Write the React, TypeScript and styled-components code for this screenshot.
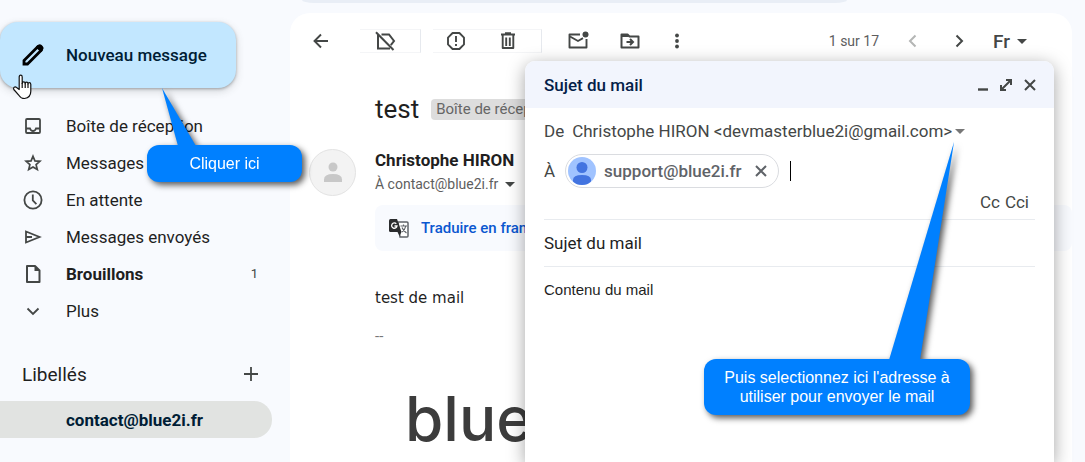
import React from "react";
import styled, { createGlobalStyle, css } from "styled-components";

const GlobalStyle = createGlobalStyle`
  *, *::before, *::after { box-sizing: border-box; }
  html, body { margin: 0; padding: 0; }
  body {
    background: #f8fafe;
    color: #1f1f1f;
    font-family: Roboto, "Liberation Sans", sans-serif;
    font-size: 17px;
    overflow: hidden;
  }
  button, input, select, textarea {
    font: inherit;
    color: inherit;
    background: none;
    border: 0;
    padding: 0;
    margin: 0;
    outline: 0;
  }
  button { cursor: pointer; }
  a { color: inherit; text-decoration: none; }
`;

const Page = styled.div`
  position: relative;
  display: flex;
  height: 100vh;
  overflow: hidden;
`;

/* ---------- Sidebar ---------- */

const Sidebar = styled.aside`
  position: relative;
  flex: 0 0 290px;
  padding-top: 22px;
  z-index: 3;
`;

const ComposeButton = styled.button`
  display: flex;
  align-items: center;
  gap: 20px;
  width: 236px;
  height: 66px;
  padding-left: 20px;
  border-radius: 18px;
  background: #c2e7ff;
  color: #001d35;
  font-size: 17px;
  font-weight: 500;
  box-shadow: 0 1px 3px rgba(60, 64, 67, 0.4), 0 3px 8px rgba(60, 64, 67, 0.2);
`;

const NavList = styled.nav`
  display: flex;
  flex-direction: column;
  margin-top: 19px;
`;

const NavItem = styled.a<{ $bold?: boolean; $active?: boolean }>`
  display: grid;
  grid-template-columns: 26px 1fr auto;
  column-gap: 20px;
  align-items: center;
  width: 272px;
  height: 37px;
  padding: 0 14px 0 20px;
  border-radius: 0 18px 18px 0;
  font-weight: ${(p) => (p.$bold || p.$active ? 700 : 400)};
  ${(p) =>
    p.$active &&
    css`
      background: #e1e3e1;
      color: #001d35;
    `}
  svg { justify-self: center; }
`;

const Count = styled.span`
  font-size: 13px;
  font-weight: 400;
  color: #444746;
`;

const LabelsHeader = styled.div`
  display: flex;
  align-items: center;
  justify-content: space-between;
  margin: 25px 30px 7px 22px;
  height: 40px;
  font-size: 19px;
`;

const LabelsTitle = styled.h2`
  margin: 0;
  font-size: inherit;
  font-weight: 400;
`;

const IconButton = styled.button`
  display: inline-flex;
  align-items: center;
  justify-content: center;
  color: #444746;
`;

/* ---------- Message pane ---------- */

const Content = styled.div`
  flex: 1;
  min-width: 0;
  display: flex;
  flex-direction: column;
  padding-right: 13px;
`;

const SearchEdge = styled.div`
  flex: 0 0 3px;
  width: 545px;
  margin: 0 0 10px 12px;
  border-radius: 0 0 12px 12px / 0 0 3px 3px;
  background: #e9eef6;
`;

const MessagePane = styled.main`
  flex: 1;
  background: #fff;
  border-radius: 20px 20px 0 0;
  overflow: hidden;
`;

const Toolbar = styled.div`
  display: flex;
  align-items: center;
  height: 56px;
  padding: 0 45px 0 20px;
`;

const ToolGroup = styled.div<{ $gap?: number; $left: number; $boxed?: boolean }>`
  display: flex;
  align-items: center;
  gap: ${(p) => p.$gap ?? 0}px;
  height: 24px;
  margin-left: ${(p) => p.$left}px;
  ${(p) =>
    p.$boxed &&
    css`
      padding: 0 23px 0 13px;
      border: solid #f4f5f7;
      border-width: 1px 1px 1px 0;
      border-right-color: #e6e9ee;
    `}
`;

const Pager = styled.div`
  display: flex;
  align-items: center;
  gap: 22px;
  margin-left: auto;
  font-size: 14px;
  color: #5e5e5e;
`;

const InputTool = styled(IconButton)`
  gap: 7px;
  font-size: 19px;
  font-weight: 500;
`;

const SubjectRow = styled.div`
  display: flex;
  align-items: center;
  gap: 12px;
  height: 40px;
  margin: 20px 0 0 85px;
`;

const Subject = styled.h1`
  margin: 0;
  font-size: 26px;
  line-height: 32px;
  font-weight: 400;
`;

const Badge = styled.span`
  padding: 0 5px;
  border-radius: 4px;
  background: #ddd;
  color: #666;
  font-size: 15px;
  line-height: 21px;
`;

const SenderRow = styled.div`
  display: grid;
  grid-template-columns: 47px 1fr;
  column-gap: 19px;
  align-items: center;
  margin: 19px 0 0 19px;
`;

const Avatar = styled.div`
  display: flex;
  align-items: center;
  justify-content: center;
  height: 47px;
  border: 1px solid #e3e3e3;
  border-radius: 50%;
  background: #f3f3f3;
`;

const SenderName = styled.div`
  font-weight: 700;
  line-height: 24px;
`;

const Recipient = styled.button`
  display: flex;
  align-items: center;
  gap: 7px;
  color: #5e5e5e;
  font-size: 14px;
  line-height: 24px;
`;

const Mail = styled.div`
  margin-left: 85px;
`;

const Translate = styled.div`
  display: flex;
  align-items: center;
  gap: 12px;
  height: 46px;
  margin-top: 9px;
  padding-left: 14px;
  border-radius: 8px;
  background: #f8fafe;
`;

const TranslateLink = styled.a`
  color: #0b57d0;
  font-size: 15px;
  font-weight: 500;
`;

const MailText = styled.div`
  margin-top: 37px;
  font-family: "DejaVu Sans", sans-serif;
  font-size: 15px;
  line-height: 20px;
`;

const Signature = styled.div`
  margin-top: 18px;
  font-size: 15px;
  line-height: 20px;
  color: #777;
`;

const Wordmark = styled.div`
  margin: 38px 0 0 30px;
  font-family: Inter, sans-serif;
  font-size: 62px;
  line-height: 70px;
  font-weight: 500;
  color: #3c3c3c;
`;

/* ---------- Compose window ---------- */

const ComposeWindow = styled.section`
  position: absolute;
  top: 61px;
  right: 31px;
  bottom: 0;
  z-index: 4;
  width: 529px;
  border-radius: 10px 10px 0 0;
  background: #fff;
  box-shadow: 0 4px 18px rgba(0, 0, 0, 0.36);
`;

const ComposeHeader = styled.header`
  display: flex;
  align-items: center;
  justify-content: space-between;
  height: 47px;
  padding: 0 17px 0 19px;
  border-radius: 10px 10px 0 0;
  background: #f2f5fd;
`;

const ComposeTitle = styled.h2`
  margin: 0;
  font-size: 17px;
  font-weight: 500;
  color: #041e49;
`;

const WindowButtons = styled.div`
  display: flex;
  align-items: center;
  gap: 10px;
`;

const ComposeForm = styled.form`
  display: flex;
  flex-direction: column;
  padding: 0 19px;
`;

const FieldRow = styled.div<{ $height: number }>`
  display: flex;
  align-items: center;
  height: ${(p) => p.$height}px;
  color: #444746;
`;

const FromSelect = styled.select`
  appearance: none;
  margin: 0 2px 0 8px;
`;

const Chip = styled.span`
  display: flex;
  align-items: center;
  gap: 8px;
  height: 34px;
  margin: 0 11px 0 10px;
  padding: 0 10px 0 2px;
  border: 1px solid #dadce0;
  border-radius: 17px;
  color: #5f6368;
  font-weight: 500;
`;

const ChipRemove = styled(IconButton)`
  margin-left: 4px;
  color: #5f6368;
`;

const TextCursor = styled.span`
  width: 1px;
  height: 20px;
  background: #000;
`;

const HiddenInput = styled.input`
  flex: 1;
  min-width: 0;
`;

const CopyRow = styled.div`
  display: flex;
  justify-content: flex-end;
  gap: 5px;
  height: 32px;
  padding: 4px 6px 0 0;
  border-bottom: 1px solid #e8ebef;
  color: #444746;
  line-height: 20px;
`;

const SubjectInput = styled.input`
  height: 47px;
  border-bottom: 1px solid #e8ebef;
`;

const BodyInput = styled.textarea`
  height: 60px;
  margin-top: 13px;
  resize: none;
  overflow: hidden;
  font-family: "Liberation Sans", Arial, sans-serif;
  font-size: 15px;
  line-height: 20px;
`;

/* ---------- Annotations ---------- */

const CalloutBox = styled.div<{ $left: number; $top: number; $width: number }>`
  position: absolute;
  left: ${(p) => p.$left}px;
  top: ${(p) => p.$top}px;
  width: ${(p) => p.$width}px;
  padding: 9px 12px;
  border-radius: 12px;
  background: #0080ff;
  color: #fff;
  font-family: "Liberation Sans", Arial, sans-serif;
  font-size: 16px;
  line-height: 19px;
  text-align: center;
  filter: drop-shadow(3px 3px 3px rgba(0, 0, 0, 0.65));
  pointer-events: none;
`;

const CalloutTail = styled.svg<{ $left: number }>`
  position: absolute;
  left: ${(p) => p.$left}px;
  bottom: calc(100% - 1px);
`;

const HandPointer = styled.svg`
  position: absolute;
  left: 12px;
  top: 74px;
`;

type CalloutProps = {
  left: number;
  top: number;
  width: number;
  tailLeft: number;
  tailWidth: number;
  tailHeight: number;
  points: string;
  children: React.ReactNode;
};

function Callout({ left, top, width, tailLeft, tailWidth, tailHeight, points, children }: CalloutProps) {
  return (
    <CalloutBox $left={left} $top={top} $width={width}>
      <CalloutTail $left={tailLeft} width={tailWidth} height={tailHeight} aria-hidden="true">
        <polygon points={points} fill="#0080ff" />
      </CalloutTail>
      {children}
    </CalloutBox>
  );
}

/* ---------- Icons ---------- */

type IconProps = { w?: number; h?: number; box?: string; sw?: number; color?: string; children: React.ReactNode };

function Icon({ w = 20, h = w, box = "0 0 20 20", sw = 2, color = "#444746", children }: IconProps) {
  return (
    <svg width={w} height={h} viewBox={box} fill="none" stroke={color} strokeWidth={sw} aria-hidden="true">
      {children}
    </svg>
  );
}

const Caret = ({ color = "#444746" }: { color?: string }) => (
  <svg width="10" height="5" viewBox="0 0 10 5" aria-hidden="true">
    <path d="M0 0h10L5 5z" fill={color} />
  </svg>
);

const PencilIcon = () => (
  <Icon w={26} box="0 0 26 26" color="#000" sw={2.800}>
    <path d="M4 22v-3.500L17.500 5l3.500 3.500L7.500 22z" />
    <path d="M16 4.500l2.200-1.800q1.800-1.200 3.400.4l1.200 1.200q1.600 1.600.2 3.400L21.200 10z" fill="#000" stroke="none" />
  </Icon>
);

const InboxIcon = () => (
  <Icon w={18} box="0 0 18 18" sw={1.800}>
    <rect x="2" y="2" width="14" height="14" rx="1" />
    <path d="M2 11.500h4q.8 2.500 3 2.500t3-2.500h4" />
  </Icon>
);

const StarIcon = () => (
  <Icon w={20} sw={1.700}>
    <path d="M10 3.200l1.900 4.700 5 .4-3.800 3.300 1.200 4.900L10 13.900l-4.300 2.600 1.200-4.900L3.100 8.300l5-.4z" />
  </Icon>
);

const ClockIcon = () => (
  <Icon w={20} sw={1.800}>
    <circle cx="10" cy="10" r="8.600" />
    <path d="M9.800 4.500v6l3.600 3.600" />
  </Icon>
);

const SendIcon = () => (
  <Icon w={20} sw={1.800}>
    <path d="M3 4.500L16.500 10 3 15.500zM3 10h6" />
  </Icon>
);

const FileIcon = () => (
  <Icon w={20}>
    <path d="M4 2h8l4.500 4.500V18H4z" strokeLinejoin="round" />
    <path d="M11.500 1.500v5.500h5.500z" fill="#444746" stroke="none" />
  </Icon>
);

const ChevronDown = () => (
  <Icon w={14} box="0 0 14 14" sw={1.800}>
    <path d="M1.500 4.500L7 10l5.500-5.500" />
  </Icon>
);

const PlusIcon = () => (
  <Icon w={18} box="0 0 18 18" sw={1.800}>
    <path d="M9 2v14M2 9h14" />
  </Icon>
);

const BackIcon = () => (
  <Icon w={22} box="0 0 22 22" sw={1.900}>
    <path d="M18 11H5M11 4.500L4.500 11l6.500 6.500" />
  </Icon>
);

const LabelOffIcon = () => (
  <Icon w={24} box="0 0 24 24" sw={2}>
    <path d="M8.500 5.500H16l5 6.500-3.200 4.200M17 19.500H5V6" />
    <path d="M3 3.200L20.500 21" />
  </Icon>
);

const SpamIcon = () => (
  <Icon w={20} sw={1.900}>
    <path d="M6.600 2h6.800L18 6.600v6.800L13.400 18H6.600L2 13.400V6.600z" strokeLinejoin="round" />
    <path d="M10 5v6M10 13v2" />
  </Icon>
);

const TrashIcon = () => (
  <Icon w={20} sw={1.900}>
    <path d="M3 3.500h14M7 2.200h6M4.700 4v13h10.600V4" strokeLinejoin="round" />
    <path d="M8.200 6.500v8.500M11.800 6.500v8.500" />
  </Icon>
);

const UnreadIcon = () => (
  <Icon w={22} box="0 0 22 22" sw={1.900}>
    <path d="M13 4.500H2.500v13h17V9" strokeLinejoin="round" />
    <path d="M3 6.500l8 4.500 5-2.800" />
    <circle cx="18.500" cy="4.500" r="3" fill="#444746" stroke="none" />
  </Icon>
);

const MoveIcon = () => (
  <Icon w={22} box="0 0 22 22" sw={2}>
    <path d="M2.500 4.500h6l2 2h9v11h-17z" strokeLinejoin="round" />
    <path d="M2 4h6l2 3H2z" fill="#444746" stroke="none" />
    <path d="M7.500 12h6M11 9l3 3-3 3" />
  </Icon>
);

const DotsIcon = () => (
  <Icon w={12} h={16} box="0 0 12 16" sw={0}>
    <g fill="#444746">
      <circle cx="6" cy="2.500" r="1.900" />
      <circle cx="6" cy="8" r="1.900" />
      <circle cx="6" cy="13.500" r="1.900" />
    </g>
  </Icon>
);

const ChevronSide = ({ next }: { next?: boolean }) => (
  <Icon w={24} box="0 0 24 24" color={next ? "#444746" : "#b4b6b5"}>
    <path d={next ? "M9.500 6.500L15 12l-5.500 5.500" : "M14.500 6.500L9 12l5.500 5.500"} />
  </Icon>
);

const TranslateIcon = () => (
  <svg width="20" height="20" viewBox="0 0 20 20" aria-hidden="true">
    <path d="M9 4h9q1 0 1 1v13q0 1-1 1h-7z" fill="#fff" stroke="#5f6368" strokeWidth="1.500" />
    <path d="M1.500 1H8l4.500 13h-11Q0 14 0 12.500v-10Q0 1 1.500 1z" fill="#2b2c2e" />
    <path d="M8.500 14h4L10.500 18z" fill="#2b2c2e" />
    <path d="M7.300 5.700A2.700 2.700 0 1 0 8 8H5.500" fill="none" stroke="#fff" strokeWidth="1.300" />
    <path d="M11.500 8h6.500M14.500 6.500V8M16.800 8q-.8 4-4 6M13 9.500q1.500 3.500 4.500 5.500" fill="none" stroke="#5f6368" strokeWidth="1.200" />
  </svg>
);

const Person = () => (
  <svg width="20" height="20" viewBox="0 0 20 20" aria-hidden="true">
    <g fill="#c8c8c8">
      <circle cx="10" cy="5" r="4.500" />
      <path d="M1 20v-2.500Q1 12 10 12t9 5.500V20z" />
    </g>
  </svg>
);

const ChipAvatar = () => (
  <svg width="28" height="28" viewBox="0 0 28 28" aria-hidden="true">
    <circle cx="14" cy="14" r="14" fill="#a0c3ff" />
    <circle cx="14" cy="10.500" r="5.500" fill="#4374e0" />
    <path d="M5 24.500V23q0-5 9-5t9 5v1.500Q19.500 28 14 28t-9-3.500z" fill="#4374e0" />
  </svg>
);

const CloseIcon = ({ color = "#444746" }: { color?: string }) => (
  <Icon w={14} box="0 0 14 14" sw={2} color={color}>
    <path d="M2 2l10 10M12 2L2 12" />
  </Icon>
);

const MinimizeIcon = () => (
  <Icon w={12} h={14} box="0 0 12 14" sw={2.400}>
    <path d="M1 11.500h10" />
  </Icon>
);

const ExpandIcon = () => (
  <Icon w={14} box="0 0 14 14" sw={2}>
    <path d="M7 2h5v5M2 7v5h5M12 2L2 12" />
  </Icon>
);

const navItems = [
  { label: "Boîte de réception", icon: <InboxIcon /> },
  { label: "Messages suivis", icon: <StarIcon /> },
  { label: "En attente", icon: <ClockIcon /> },
  { label: "Messages envoyés", icon: <SendIcon /> },
  { label: "Brouillons", icon: <FileIcon />, count: 1 },
  { label: "Plus", icon: <ChevronDown /> },
];

export default function App() {
  return (
    <>
      <GlobalStyle />
      <Page>
        <Sidebar>
          <ComposeButton type="button">
            <PencilIcon />
            Nouveau message
          </ComposeButton>
          <NavList>
            {navItems.map((item) => (
              <NavItem key={item.label} href="#" $bold={item.count !== undefined}>
                {item.icon}
                <span>{item.label}</span>
                {item.count !== undefined && <Count>{item.count}</Count>}
              </NavItem>
            ))}
          </NavList>
          <LabelsHeader>
            <LabelsTitle>Libellés</LabelsTitle>
            <IconButton type="button" aria-label="Créer un libellé">
              <PlusIcon />
            </IconButton>
          </LabelsHeader>
          <NavItem href="#" $active>
            <span />
            <span>contact@blue2i.fr</span>
          </NavItem>
          <Callout
            left={147}
            top={145}
            width={155}
            tailLeft={14}
            tailWidth={36}
            tailHeight={58}
            points="1,0 17,58 35,58"
          >
            Cliquer ici
          </Callout>
          <HandPointer width="20" height="26" viewBox="0 0 20 26" aria-hidden="true">
            <path
              d="M7.200 15.500V3Q7.200 1.200 8.700 1.200T10.200 3v6.500q0-1.600 1.500-1.600t1.500 1.800q0-1.500 1.400-1.500T16 9.900q.2-1.200 1.400-1.200t1.400 1.700v6.800q0 6.300-6.300 7.300-3.500 0-5.300-2.800L1.800 15.500q-.8-1.600.4-2.300t2.400.3z"
              fill="#fff"
              stroke="#111"
              strokeWidth="1.200"
              strokeLinejoin="round"
            />
            <path d="M10.200 9v5M13.200 9.500V14M16 10v4" stroke="#111" strokeWidth="1.200" />
          </HandPointer>
        </Sidebar>

        <Content>
          <SearchEdge />
          <MessagePane>
            <Toolbar>
              <IconButton type="button" aria-label="Retour"><BackIcon /></IconButton>
              <ToolGroup $left={28} $boxed>
                <IconButton type="button" aria-label="Supprimer le libellé"><LabelOffIcon /></IconButton>
              </ToolGroup>
              <ToolGroup $left={12} $gap={32} $boxed>
                <IconButton type="button" aria-label="Signaler comme spam"><SpamIcon /></IconButton>
                <IconButton type="button" aria-label="Supprimer"><TrashIcon /></IconButton>
              </ToolGroup>
              <ToolGroup $left={25} $gap={30}>
                <IconButton type="button" aria-label="Marquer comme non lu"><UnreadIcon /></IconButton>
                <IconButton type="button" aria-label="Déplacer vers"><MoveIcon /></IconButton>
                <IconButton type="button" aria-label="Plus d'options"><DotsIcon /></IconButton>
              </ToolGroup>
              <Pager>
                <span>1 sur 17</span>
                <IconButton type="button" aria-label="Plus récent"><ChevronSide /></IconButton>
                <IconButton type="button" aria-label="Plus ancien"><ChevronSide next /></IconButton>
                <InputTool type="button">Fr<Caret /></InputTool>
              </Pager>
            </Toolbar>
            <SubjectRow>
              <Subject>test</Subject>
              <Badge>Boîte de réception</Badge>
            </SubjectRow>
            <SenderRow>
              <Avatar><Person /></Avatar>
              <div>
                <SenderName>Christophe HIRON</SenderName>
                <Recipient type="button">À contact@blue2i.fr<Caret /></Recipient>
              </div>
            </SenderRow>
            <Mail>
              <Translate>
                <TranslateIcon />
                <TranslateLink href="#">Traduire en français</TranslateLink>
              </Translate>
              <MailText>test de mail</MailText>
              <Signature>--</Signature>
              <Wordmark>blue2i</Wordmark>
            </Mail>
          </MessagePane>
        </Content>

        <ComposeWindow>
          <ComposeHeader>
            <ComposeTitle>Sujet du mail</ComposeTitle>
            <WindowButtons>
              <IconButton type="button" aria-label="Réduire"><MinimizeIcon /></IconButton>
              <IconButton type="button" aria-label="Plein écran"><ExpandIcon /></IconButton>
              <IconButton type="button" aria-label="Fermer"><CloseIcon /></IconButton>
            </WindowButtons>
          </ComposeHeader>
          <ComposeForm>
            <FieldRow $height={46}>
              <label htmlFor="from">De</label>
              <FromSelect id="from">
                <option>{"Christophe HIRON <devmasterblue2i@gmail.com>"}</option>
              </FromSelect>
              <Caret color="#777" />
            </FieldRow>
            <FieldRow $height={34}>
              <label htmlFor="to">À</label>
              <Chip>
                <ChipAvatar />
                support@blue2i.fr
                <ChipRemove type="button" aria-label="Retirer"><CloseIcon color="#5f6368" /></ChipRemove>
              </Chip>
              <TextCursor />
              <HiddenInput id="to" />
            </FieldRow>
            <CopyRow>
              <a href="#">Cc</a>
              <a href="#">Cci</a>
            </CopyRow>
            <SubjectInput aria-label="Objet" defaultValue="Sujet du mail" />
            <BodyInput aria-label="Corps du message" defaultValue="Contenu du mail" />
          </ComposeForm>
          <Callout
            left={179}
            top={298}
            width={266}
            tailLeft={184}
            tailWidth={68}
            tailHeight={218}
            points="66,0 1,218 32,218"
          >
            Puis selectionnez ici l'adresse à utiliser pour envoyer le mail
          </Callout>
        </ComposeWindow>
      </Page>
    </>
  );
}
